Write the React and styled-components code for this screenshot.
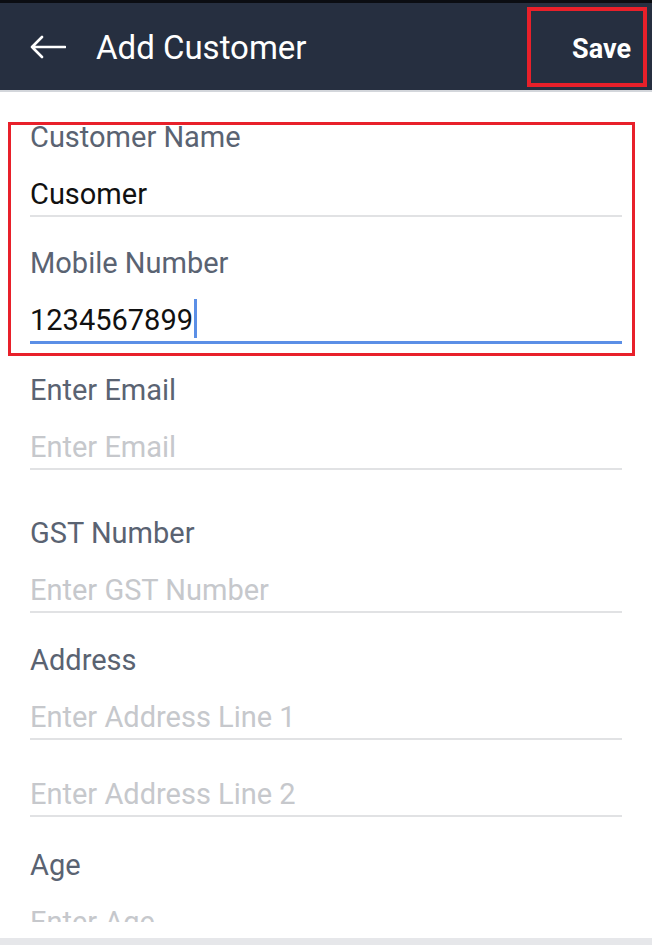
import React from 'react'
import styled, { createGlobalStyle } from 'styled-components'

const GlobalStyle = createGlobalStyle`
  html, body {
    margin: 0;
    padding: 0;
    background: #ffffff;
  }
  body {
    font-family: Roboto, "Noto Sans", "Liberation Sans", sans-serif;
  }
`

const Screen = styled.div`
  width: 652px;
  height: 945px;
  display: flex;
  flex-direction: column;
  overflow: hidden;
  background: #ffffff;
`

const Header = styled.header`
  flex: none;
  height: 87px;
  display: flex;
  align-items: center;
  background: #262f40;
  border-top: 3px solid #0b0d12;
  border-bottom: 2px solid #d3d6db;
  padding: 0 5px 0 30px;
`

const BackButton = styled.button`
  display: flex;
  align-items: center;
  padding: 0;
  margin: 0 30px 0 0;
  border: none;
  background: none;
  cursor: pointer;
`

const Title = styled.h1`
  flex: 1;
  margin: 0;
  padding-top: 3px;
  font-size: 33px;
  font-weight: 400;
  color: #ffffff;
  line-height: 40px;
`

const SaveButton = styled.button`
  width: 120px;
  height: 80px;
  box-sizing: border-box;
  display: flex;
  align-items: center;
  justify-content: flex-end;
  padding: 4px 12px 0 0;
  border: 4px solid #e8202a;
  background: transparent;
  color: #ffffff;
  font-family: Roboto, "Noto Sans", sans-serif;
  font-size: 27px;
  font-weight: 700;
  cursor: pointer;
`

const ScrollArea = styled.main`
  flex: 1;
  overflow: hidden;
`

const Form = styled.div`
  display: flex;
  flex-direction: column;
`

const Highlight = styled.div`
  margin: 30px 17px 0 8px;
  padding: 0 10px 9px 19px;
  border: 3px solid #e8202a;
  display: flex;
  flex-direction: column;
`

const Fields = styled.div`
  display: flex;
  flex-direction: column;
  padding: 0 30px;
  margin-top: 22px;
`

const Field = styled.div`
  display: flex;
  flex-direction: column;
  margin-top: ${({ $gap }) => $gap}px;
`

const Label = styled.div`
  font-size: 29px;
  line-height: 24px;
  height: 24px;
  color: #5a6372;
  margin-bottom: 28px;
  white-space: nowrap;
`

const Input = styled.div`
  font-size: 29px;
  line-height: 34px;
  height: 34px;
  padding-bottom: 4px;
  color: ${({ $empty }) => ($empty ? '#c6c8cc' : '#111111')};
  border-bottom: ${({ $focused }) =>
    $focused ? '3px solid #5b8fe6' : '2px solid #e1e2e4'};
  margin-top: ${({ $gap }) => $gap || 0}px;
  white-space: nowrap;
`

const Caret = styled.span`
  display: inline-block;
  width: 3px;
  height: 39px;
  margin: -5px 0 -5px 1px;
  vertical-align: -3px;
  background: #5b8fe6;
`

const Footer = styled.div`
  flex: none;
  height: 16px;
  border-bottom: 7px solid #e6e7ea;
  background: #ffffff;
`

function BackArrow() {
  return (
    <svg width="36" height="24" viewBox="0 0 36 24" fill="none">
      <path
        d="M35 12H2M12 2L2 12l10 10"
        stroke="#ffffff"
        strokeWidth="2.6"
        strokeLinecap="round"
        strokeLinejoin="round"
      />
    </svg>
  )
}

function TextField({ label, value, placeholder, focused, gap = 35 }) {
  return (
    <Field $gap={gap}>
      <Label>{label}</Label>
      <Input $empty={!value} $focused={focused}>
        {value || placeholder}
        {focused && <Caret />}
      </Input>
    </Field>
  )
}

export default function App() {
  return (
    <>
      <GlobalStyle />
      <Screen>
        <Header>
          <BackButton aria-label="Back">
            <BackArrow />
          </BackButton>
          <Title>Add Customer</Title>
          <SaveButton>Save</SaveButton>
        </Header>
        <ScrollArea>
          <Form>
            <Highlight>
              <TextField label="Customer Name" value="Cusomer" gap={0} />
              <TextField
                label="Mobile Number"
                value="1234567899"
                gap={34}
                focused
              />
            </Highlight>
            <Fields>
              <TextField label="Enter Email" placeholder="Enter Email" gap={0} />
              <TextField
                label="GST Number"
                placeholder="Enter GST Number"
                gap={51}
              />
              <Field $gap={35}>
                <Label>Address</Label>
                <Input $empty>Enter Address Line 1</Input>
                <Input $empty $gap={37}>
                  Enter Address Line 2
                </Input>
              </Field>
              <TextField label="Age" placeholder="Enter Age" gap={36} />
            </Fields>
          </Form>
        </ScrollArea>
        <Footer />
      </Screen>
    </>
  )
}
